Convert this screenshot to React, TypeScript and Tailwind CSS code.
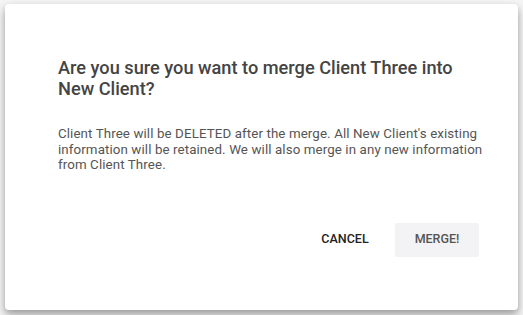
export default function App() {
  return (
    <div
      className="w-[523px] h-[315px] bg-[#f4f4f4] pt-[4px] pl-[5px]"
      style={{ fontFamily: 'Roboto, "Liberation Sans", sans-serif' }}
    >
      {/* Dialog card */}
      <div className="w-[513px] h-[306px] bg-white rounded-[4px] shadow-[0_6px_10px_rgba(0,0,0,0.25),0_2px_6px_rgba(0,0,0,0.15)] flex flex-col pl-[53px] pr-[39px] pt-[53px]">
        <h2 className="w-[415px] text-[18.2px] leading-[21px] font-medium text-[#444]">
          Are you sure you want to merge Client Three into New Client?
        </h2>
        <p className="mt-[27px] whitespace-nowrap text-[13.33px] tracking-[0.1px] leading-[15.5px] text-[#555]">
          Client Three will be DELETED after the merge. All New Client's existing
          <br />
          information will be retained. We will also merge in any new information
          <br />
          from Client Three.
        </p>
        {/* Actions */}
        <div className="mt-[50px] flex justify-end gap-[8px]">
          <button className="w-[84px] h-[34px] rounded-[4px] text-[12.5px] font-medium uppercase text-[#222]">
            Cancel
          </button>
          <button className="w-[84px] h-[34px] rounded-[2px] bg-[#f3f3f5] text-[12.5px] font-medium uppercase text-[#555]">
            Merge!
          </button>
        </div>
      </div>
    </div>
  )
}
